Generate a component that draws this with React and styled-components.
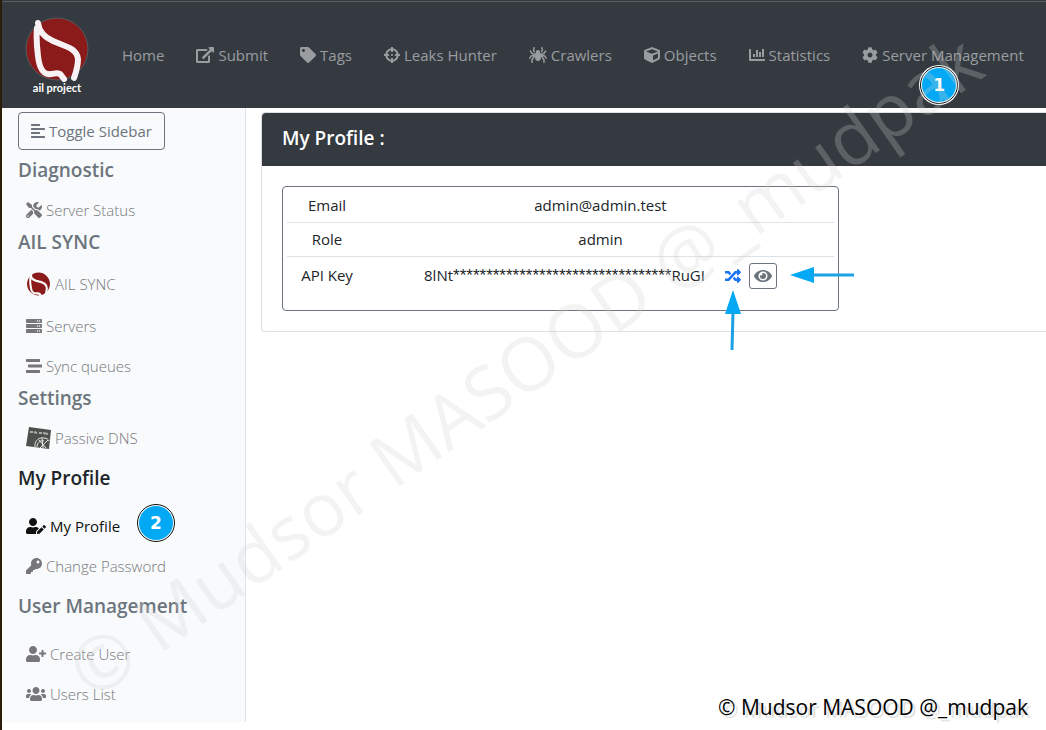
import React from 'react';
import styled, { createGlobalStyle } from 'styled-components';
import {
  FaAlignLeft,
  FaChartBar,
  FaCog,
  FaCrosshairs,
  FaCube,
  FaEye,
  FaKey,
  FaRandom,
  FaServer,
  FaSpider,
  FaStream,
  FaTag,
  FaTools,
  FaUserEdit,
  FaUserPlus,
  FaUsers,
} from 'react-icons/fa';

const ExternalLink = () => (
  <svg viewBox="0 0 576 512" fill="currentColor" aria-hidden="true">
    <path d="M576 24v127.984c0 21.461-25.96 31.98-40.971 16.971l-35.707-35.709-243.523 243.523c-9.373 9.373-24.568 9.373-33.941 0l-22.627-22.627c-9.373-9.373-9.373-24.569 0-33.941L442.756 76.676l-35.703-35.705C391.982 25.9 402.656 0 424.024 0H552c13.255 0 24 10.745 24 24zM407.029 270.794l-16 16A23.999 23.999 0 0 0 384 303.765V448H64V128h264a24.003 24.003 0 0 0 16.97-7.029l16-16C376.089 89.851 365.381 64 344 64H48C21.49 64 0 85.49 0 112v352c0 26.51 21.49 48 48 48h352c26.51 0 48-21.49 48-48V287.764c0-21.382-25.852-32.09-40.971-16.97z" />
  </svg>
);

const LogoMark = () => (
  <svg width="66" height="66" viewBox="0 0 66 66" aria-hidden="true">
    <circle cx="33" cy="33" r="31" fill="#8b1a1a" stroke="#555a5f" strokeWidth="1" />
    <path
      d="M14 7C15 15 20 21 29 25C40 30 53 32 54 43C54 51 52 56 50 62M13 12C12 22 13 32 14 40C15 49 17 57 24 58C29 59 34 55 37 59L40 63"
      fill="none"
      stroke="#f7f3f4"
      strokeWidth="6"
      strokeLinecap="round"
      strokeLinejoin="round"
    />
  </svg>
);

const SyncMark = () => (
  <svg viewBox="0 0 24 24" aria-hidden="true">
    <circle cx="12" cy="12" r="11" fill="#8b1a1a" />
    <path
      d="M5 2C4 6 6 8 10 9C16 10 20 12 20 16C20 19 19 21 19 23M5 3C3 8 4 12 5 17C6 21 8 21 11 21C13 21 14 22 14 24"
      fill="none"
      stroke="#f8f9fa"
      strokeWidth="2"
      strokeLinecap="round"
    />
  </svg>
);

const DnsMark = () => (
  <svg viewBox="0 0 25 24" aria-hidden="true">
    <path d="M3 1L25 4L23 23L0 20Z" fill="#4d504d" />
    <path
      d="M4 6H7M8 6L11 7M13 7L16 7M17 7L22 8"
      stroke="#a9aca9"
      strokeWidth="2"
      fill="none"
    />
    <path
      d="M9 21C8 14 14 11 18 12C21 12 23 14 23 15M11 21C11 16 15 14 18 15M13 14L20 22M22 14L14 22M16 12L17 22"
      stroke="#e4e6e4"
      strokeWidth="1"
      fill="none"
    />
  </svg>
);

const navItems = [
  { label: 'Home' },
  { label: 'Submit', icon: ExternalLink, iconWidth: 18 },
  { label: 'Tags', icon: FaTag },
  { label: 'Leaks Hunter', icon: FaCrosshairs },
  { label: 'Crawlers', icon: FaSpider, iconWidth: 18 },
  { label: 'Objects', icon: FaCube },
  { label: 'Statistics', icon: FaChartBar },
  { label: 'Server Management', icon: FaCog, step: 1 },
];

const sections = [
  { title: 'Diagnostic', links: [{ label: 'Server Status', icon: FaTools }] },
  {
    title: 'AIL SYNC',
    links: [
      { label: 'AIL SYNC', icon: SyncMark, iconWidth: 25, iconHeight: 28 },
      { label: 'Servers', icon: FaServer },
      { label: 'Sync queues', icon: FaStream },
    ],
  },
  {
    title: 'Settings',
    links: [{ label: 'Passive DNS', icon: DnsMark, iconWidth: 25, iconHeight: 24 }],
  },
  {
    title: 'My Profile',
    active: true,
    spaced: true,
    links: [
      { label: 'My Profile', icon: FaUserEdit, iconWidth: 20, active: true, step: 2 },
      { label: 'Change Password', icon: FaKey },
    ],
  },
  {
    title: 'User Management',
    spaced: true,
    links: [
      { label: 'Create User', icon: FaUserPlus, iconWidth: 20 },
      { label: 'Users List', icon: FaUsers, iconWidth: 20 },
    ],
  },
];

const App = () => {
  return (
    <Page>
      <GlobalStyle />
      <Navbar>
        <Brand href="#home">
          <LogoMark />
          <BrandName>ail project</BrandName>
        </Brand>
        {navItems.map(({ label, icon: Icon, iconWidth, step }) => (
          <NavLink key={label} href="#nav">
            {Icon && (
              <IconSlot $width={iconWidth}>
                <Icon />
              </IconSlot>
            )}
            {label}
            {step && <NavStep>{step}</NavStep>}
          </NavLink>
        ))}
      </Navbar>
      <Body>
        <Sidebar>
          <ToggleButton type="button">
            <IconSlot $width={14}>
              <FaAlignLeft />
            </IconSlot>
            Toggle Sidebar
          </ToggleButton>
          {sections.map((section) => (
            <section key={section.title}>
              <SectionTitle $active={section.active} $spaced={section.spaced}>
                {section.title}
              </SectionTitle>
              {section.links.map(({ label, icon: Icon, iconWidth, iconHeight, active, step }) => (
                <SideLink key={label} href="#side" $active={active}>
                  <IconSlot $width={iconWidth} $height={iconHeight}>
                    <Icon />
                  </IconSlot>
                  {label}
                  {step && <SideStep>{step}</SideStep>}
                </SideLink>
              ))}
            </section>
          ))}
        </Sidebar>
        <Main>
          <Card>
            <CardHeader>My Profile :</CardHeader>
            <CardBody>
              <ProfileBox>
                <ProfileTable>
                  <tbody>
                    <tr>
                      <th scope="row">Email</th>
                      <td>admin@admin.test</td>
                    </tr>
                    <tr>
                      <th scope="row">Role</th>
                      <td>admin</td>
                    </tr>
                    <KeyRow>
                      <th scope="row">API Key</th>
                      <td>
                        <KeyLine>
                          <span>
                            8lNt<Mask>*********************************</Mask>RuGI
                          </span>
                          <RenewLink href="#renew" aria-label="Generate new key">
                            <IconSlot>
                              <FaRandom />
                            </IconSlot>
                            <ArrowUp width="16" height="61" viewBox="0 0 16 61">
                              <path d="M8 0L16 24H0Z" fill="#03a9f4" />
                              <path d="M8 22L7 60" stroke="#1ba1e6" strokeWidth="3" />
                            </ArrowUp>
                          </RenewLink>
                          <ShowButton type="button" aria-label="Show key">
                            <IconSlot $width={18}>
                              <FaEye />
                            </IconSlot>
                            <ArrowLeft width="64" height="16" viewBox="0 0 64 16">
                              <path d="M0 8L24 0V16Z" fill="#03a9f4" />
                              <path d="M22 8H64" stroke="#1ba1e6" strokeWidth="3" />
                            </ArrowLeft>
                          </ShowButton>
                        </KeyLine>
                      </td>
                    </KeyRow>
                  </tbody>
                </ProfileTable>
              </ProfileBox>
            </CardBody>
          </Card>
        </Main>
      </Body>
      <Signature>© Mudsor MASOOD @_mudpak</Signature>
      <Watermark aria-hidden="true">
        <span>© Mudsor MASOOD @_mudpak</span>
      </Watermark>
    </Page>
  );
};

const GlobalStyle = createGlobalStyle`
  *, *::before, *::after {
    box-sizing: border-box;
  }

  body {
    margin: 0;
    background: #fff;
    color: #212529;
    font-family: 'Open Sans', 'Noto Sans', sans-serif;
    font-size: 15px;
    line-height: 24px;
  }

  a {
    text-decoration: none;
  }

  button {
    font-family: inherit;
    font-size: inherit;
    line-height: inherit;
  }
`;

const Page = styled.div`
  position: relative;
  min-height: 100vh;
  border-left: 2px solid #2b1d0a;
  overflow: hidden;
`;

const IconSlot = styled.span`
  display: inline-flex;
  flex: none;
  width: ${({ $width }) => $width || 16}px;
  height: ${({ $height }) => $height || 16}px;

  > svg {
    width: 100%;
    height: 100%;
  }
`;

const Navbar = styled.nav`
  display: flex;
  align-items: center;
  height: 108px;
  padding: 0 12px 0 22px;
  border-top: 1px solid #343a40;
  background: #343a40;
  box-shadow: inset 0 1px #5c5c5e;
`;

const Brand = styled.a`
  display: flex;
  flex-direction: column;
  align-items: center;
  margin-right: 24px;
  color: #fff;
`;

const BrandName = styled.span`
  font-family: Lato, sans-serif;
  font-size: 11px;
  font-weight: 700;
  line-height: 12px;
`;

const NavLink = styled.a`
  position: relative;
  display: flex;
  align-items: center;
  gap: 4px;
  margin-right: 16px;
  padding: 8px;
  color: #9a9da0;
  white-space: nowrap;
`;

const StepBadge = styled.span`
  position: absolute;
  display: flex;
  align-items: center;
  justify-content: center;
  width: 36px;
  height: 36px;
  border: 1px solid #fff;
  border-radius: 50%;
  outline: 1px solid #111;
  background: #03a9f4;
  color: #fff;
  font-family: 'DejaVu Sans', sans-serif;
  font-size: 17px;
  font-weight: 700;
`;

const NavStep = styled(StepBadge)`
  top: 32px;
  left: 67px;
  box-shadow: 0 0 0 2px #fff;
`;

const SideStep = styled(StepBadge)`
  top: -1px;
  left: 120px;
`;

const Body = styled.div`
  display: flex;
  align-items: flex-start;
`;

const Sidebar = styled.aside`
  flex: 0 0 244px;
  padding: 4px 16px 8px;
  border-right: 1px solid #dee2e6;
  background: #f8fafc;
`;

const ToggleButton = styled.button`
  display: flex;
  align-items: center;
  gap: 4px;
  margin-bottom: 8px;
  padding: 6px 12px;
  border: 1px solid #6c757d;
  border-radius: 4px;
  background: transparent;
  color: #6c757d;
`;

const SectionTitle = styled.h5`
  margin: ${({ $spaced }) => ($spaced ? '8px 0 16px' : '0 0 8px')};
  color: ${({ $active }) => ($active ? '#212529' : '#6c757d')};
  font-size: 19px;
  font-weight: 600;
  line-height: 24px;
`;

const SideLink = styled.a`
  position: relative;
  display: flex;
  align-items: center;
  gap: 4px;
  padding: 8px;
  color: ${({ $active }) => ($active ? '#111' : '#77777a')};
  font-weight: ${({ $active }) => ($active ? 400 : 300)};
`;

const Main = styled.main`
  flex: 1;
  min-width: 0;
  padding: 4px 0 0 15px;
`;

const Card = styled.section`
  border: 1px solid #dfdfdf;
  border-right: 0;
  border-radius: 4px 0 0 4px;
`;

const CardHeader = styled.h5`
  margin: 0;
  padding: 13px 20px 16px;
  border-radius: 4px 0 0 0;
  background: #343a40;
  color: #fff;
  font-size: 19px;
  font-weight: 600;
  line-height: 24px;
`;

const CardBody = styled.div`
  padding: 20px;
`;

const ProfileBox = styled.div`
  max-width: 557px;
  padding: 2px 4px 16px;
  border: 1px solid #6c757d;
  border-radius: 4px;
`;

const ProfileTable = styled.table`
  width: 100%;
  border-collapse: collapse;

  th,
  td {
    padding: 4px 5px 5px;
    font-weight: 400;
    text-align: center;
    vertical-align: top;
  }

  th {
    width: 80px;
  }

  tr + tr th,
  tr + tr td {
    border-top: 1px solid #dee2e6;
  }
`;

const KeyRow = styled.tr`
  && > th,
  && > td {
    padding-top: 6px;
  }
`;

const KeyLine = styled.div`
  display: flex;
  justify-content: center;
`;

const Mask = styled.span`
  font-family: 'Liberation Sans', sans-serif;
  font-size: 17px;
  line-height: 20px;
`;

const RenewLink = styled.a`
  position: relative;
  display: flex;
  align-items: center;
  margin: 0 8px 0 20px;
  color: #1a73f0;
`;

const ShowButton = styled.button`
  position: relative;
  display: flex;
  align-items: center;
  justify-content: center;
  width: 28px;
  height: 26px;
  padding: 0;
  border: 1px solid #6c757d;
  border-radius: 3px;
  background: #fff;
  color: #6c757d;
`;

const ArrowUp = styled.svg`
  position: absolute;
  top: 27px;
  left: 0;
`;

const ArrowLeft = styled.svg`
  position: absolute;
  top: 3px;
  left: 40px;
`;

const Signature = styled.footer`
  position: absolute;
  right: 18px;
  bottom: 8px;
  color: #000;
  font-size: 21px;
  line-height: 30px;
  text-shadow: 3px 3px 1px #ddd;
`;

/* Diagonal text laid over the whole page */
const Watermark = styled.div`
  position: absolute;
  inset: 0;
  display: flex;
  align-items: center;
  justify-content: center;
  color: rgba(208, 208, 208, 0.26);
  font-size: 74px;
  line-height: 96px;
  white-space: nowrap;
  pointer-events: none;

  span {
    flex: none;
    transform: rotate(-35deg);
  }
`;

export default App;
